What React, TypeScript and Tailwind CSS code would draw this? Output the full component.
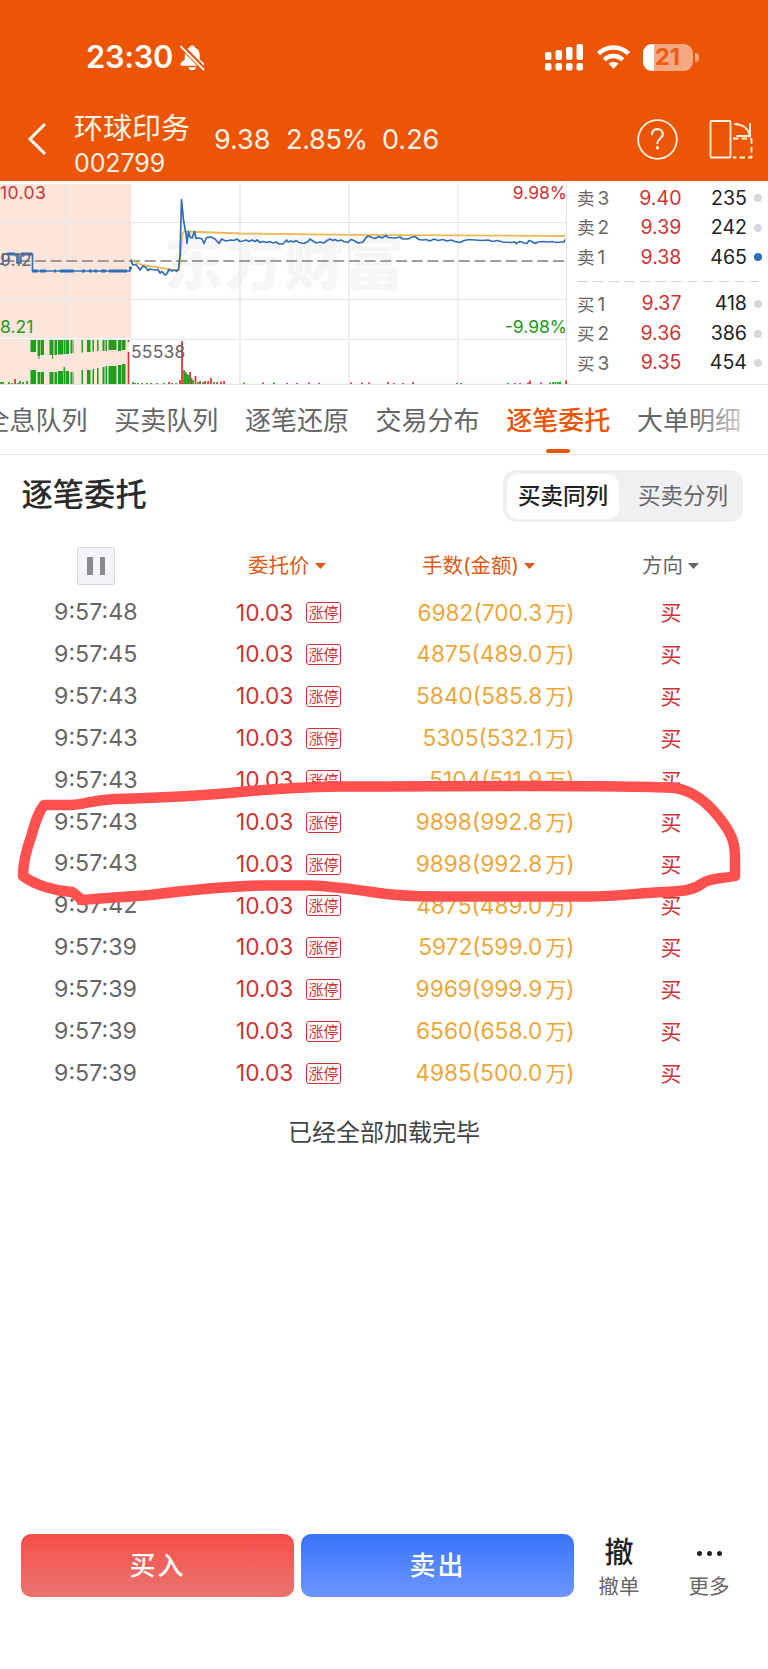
import clsx from 'clsx';

const ORDERS = [
  { time: '9:57:48', hands: '6982', amount: '700.3' },
  { time: '9:57:45', hands: '4875', amount: '489.0' },
  { time: '9:57:43', hands: '5840', amount: '585.8' },
  { time: '9:57:43', hands: '5305', amount: '532.1' },
  { time: '9:57:43', hands: '5104', amount: '511.9' },
  { time: '9:57:43', hands: '9898', amount: '992.8' },
  { time: '9:57:43', hands: '9898', amount: '992.8' },
  { time: '9:57:42', hands: '4875', amount: '489.0' },
  { time: '9:57:39', hands: '5972', amount: '599.0' },
  { time: '9:57:39', hands: '9969', amount: '999.9' },
  { time: '9:57:39', hands: '6560', amount: '658.0' },
  { time: '9:57:39', hands: '4985', amount: '500.0' },
];

const TABS = ['全息队列', '买卖队列', '逐笔还原', '交易分布', '逐笔委托', '大单明细'];

const ASKS = [
  { side: '卖', level: 3, price: '9.40', volume: 235 },
  { side: '卖', level: 2, price: '9.39', volume: 242 },
  { side: '卖', level: 1, price: '9.38', volume: 465, active: true },
];

const BIDS = [
  { side: '买', level: 1, price: '9.37', volume: 418 },
  { side: '买', level: 2, price: '9.36', volume: 386 },
  { side: '买', level: 3, price: '9.35', volume: 454 },
];

// [x, width, top bar height, bottom bar height]
const AUCTION_BARS = [
  [30.5, 5.5, 12, 14],
  [37.5, 2.5, 16, 12],
  [40.5, 3.5, 15, 12],
  [38.5, 1, 19, 12],
  [49.5, 4, 15, 12],
  [52, 1, 19, 12],
  [54.5, 2.5, 15, 12],
  [58, 5, 14.5, 13],
  [63.5, 1.5, 14, 17],
  [65.5, 3.5, 14, 13],
  [70.5, 1.5, 13.5, 12],
  [72.5, 1, 13, 12],
  [81.5, 1.5, 12.5, 14],
  [87, 3.5, 12, 14],
  [92.5, 1.5, 11.5, 15],
  [97, 1.5, 11, 16],
  [102.5, 2, 11, 17],
  [105.5, 1.5, 11, 18],
  [108.5, 8, 10, 18],
  [118, 3.5, 11, 19],
  [122, 3.5, 10, 20],
];

// [x, height, color]
const VOLUME_BARS: [number, number, string][] = [
  [1, 2, 'g'], [3, 2, 'g'], [9, 2, 'g'], [12, 1, 'g'], [15, 5, 'r'], [18, 1, 'g'], [20, 3, 'g'], [23, 2, 'g'], [27, 3, 'g'],
  [133, 2, 'g'], [135, 1, 'g'], [138, 1, 'g'], [142, 1, 'r'], [147, 1, 'g'], [151, 1, 'g'], [157, 1, 'g'], [164, 1, 'g'],
  [169, 2, 'r'], [172, 1, 'r'], [176, 1, 'g'], [180, 4, 'r'], [182, 43, 'r'], [184, 14, 'g'], [185.5, 12, 'g'], [187, 10, 'g'],
  [188.5, 9, 'g'], [190, 12, 'r'], [191.5, 6, 'g'], [193, 4, 'g'], [195.5, 8, 'r'], [198, 2, 'g'], [200, 3, 'r'], [203, 2, 'g'],
  [205, 3, 'r'], [208, 3, 'r'], [211, 6, 'r'], [214, 2, 'g'], [217, 2, 'r'], [221, 2.5, 'r'], [224, 3, 'r'], [244, 1.5, 'g'],
  [263, 1.5, 'r'], [274, 1.5, 'g'], [287, 1, 'r'], [297, 1, 'r'], [309, 1.5, 'r'], [319, 1, 'r'], [351, 1.5, 'r'],
  [362, 1.5, 'r'], [369, 1.5, 'r'], [388, 2, 'r'], [394, 1, 'r'], [403, 1, 'r'], [413, 2, 'r'], [457, 1, 'g'], [461, 1, 'g'],
  [508, 1, 'g'], [515, 1, 'r'], [520, 1, 'r'], [528, 1.5, 'r'], [530, 3.5, 'r'], [541, 1.5, 'r'], [550, 1.5, 'g'],
  [553, 2, 'g'], [555.5, 2, 'g'], [558, 2, 'g'], [560, 2.5, 'g'], [566, 3.5, 'r'],
];

const PRICE_LINE =
  '131,259.5 132,263 133,265 136,264.5 138,267 140,270 143,266 146,267.5 148,270.5 150,269 155,270 158,269.5 160,273 162,271.5 164,274 165.5,275 167,273.5 169,269.5 172,271 175,270 176.5,271.5 178.5,269 180,255 181.5,199.5 183.5,220 186,234 187,243.5 188.5,231.5 190,237 192,238 194.5,231.5 196,238.5 199,238 202,239 204,243.5 206.5,237.5 211,237 215,239 219,243.5 221.5,239 226,241 231,240 234,240.5 237,239 240,241.5 243,241 246,240 249,241.5 252,240 255,241.5 257,240 260,242.5 263,241.5 267,242.5 270,241.5 273,243 276,242 279,244 283,244 286.5,240 288,242 291,241 294,242 296,240.5 299,242.5 304,243.5 308,241.5 310,239 313,241 316,243 320,242 324,243 327,240.5 330,239 333,240.5 335,239.5 338,241 341,240 344,241.5 348,242.5 351,239.5 354,240.5 358,243 363,242 366,237.5 368,236 372,237.5 375,238.5 379,236.5 382,238 386,235.5 388,237.5 395,238 400,237 403,239 408,239 411,237.5 415,236.5 419,239.5 422,240 426,239.5 430,241 434,239 438,240.5 443,239.5 447,241 451,240 455,241.5 460,242.5 464,240.5 469,239.5 475,240 482,240.5 488,240 493,241.5 497,240.5 503,242 510,242.5 515,242 516,243.5 520,241.5 524,243 527,243.5 529,240.5 532,241.5 535,243.5 538,242 543,241.5 548,242 552,241.5 557,242.5 561,242 564,242 565,239.5';

const DIGITS = "font-['Inter','Noto_Sans_CJK_SC',sans-serif]";

function StatusBar() {
  return (
    <div className="flex h-[26px] items-center text-white">
      <span className="ml-[86px] w-[87px] whitespace-nowrap text-[30.8px] leading-none font-semibold tracking-[-0.3px]">23:30</span>
      <svg className="ml-[6px] size-[27px]" viewBox="0 0 27 27" fill="none">
        <path d="M13.2 1.5c-1.6 0-2.5 1-2.7 2-3 1.3-4.7 3.8-4.7 7.2v3.8c0 2-4.5 3.8-4.5 5.8 0 1 .7 1.5 1.8 1.5h20.2c1.1 0 1.8-.5 1.8-1.5 0-2-4.4-3.8-4.4-5.8v-3.8c0-3.4-1.8-5.9-4.8-7.2-.2-1-1.1-2-2.7-2z" fill="#fff" />
        <path d="M9.3 23.3h7.8c-.4 1.8-1.9 3-3.9 3s-3.500-1.200-3.900-3z" fill="#fff" />
        <path d="M1 .8l25 25.4" stroke="#eb5505" strokeWidth="5" />
        <path d="M1.500 2.200L25 26" stroke="#fff" strokeWidth="1.900" />
      </svg>
      <svg className="ml-[339px] h-[27px] w-[39px]" viewBox="0 0 39 27" fill="#fff">
        <rect x="0" y="8" width="6.500" height="8" rx="2" />
        <rect x="10.500" y="6" width="6.500" height="10" rx="2" />
        <rect x="21" y="3" width="6.500" height="13" rx="2" />
        <rect x="31.500" y="0" width="6.500" height="16" rx="2" />
        <rect x="0" y="19" width="6.500" height="7.500" rx="2.200" />
        <rect x="10.500" y="19" width="6.500" height="7.500" rx="2.200" />
        <rect x="21" y="19" width="6.500" height="7.500" rx="2.200" />
        <rect x="31.500" y="19" width="6.500" height="7.500" rx="2.200" />
      </svg>
      <svg className="ml-[12px] h-[26px] w-[35px]" viewBox="0 0 35 26" fill="none" stroke="#fff" strokeWidth="4.600">
        <path d="M2.500 9.700a21.200 21.200 0 0 1 30 0" />
        <path d="M8.300 15.800a13 13 0 0 1 18.400 0" />
        <path d="M17.500 24.800l-5-5a7.400 7.400 0 0 1 10 0z" fill="#fff" stroke="none" />
      </svg>
      <div className="ml-[12px] flex h-[27px] w-[50px] items-center overflow-hidden rounded-[9px] bg-[#f7a781]">
        <span className="h-full w-[11px] bg-white" />
        <span className="ml-[1px] text-[23.500px] leading-none font-bold text-[#eb5d12]">21</span>
      </div>
      <span className="ml-[1.500px] h-[9px] w-[4px] rounded-r-full bg-[#f7a781]" />
    </div>
  );
}

function StockHeader() {
  return (
    <div className="mt-[34px] flex h-[70px] items-center text-[#fff3e6]">
      <svg className="ml-[27px] h-[34px] w-[20px]" viewBox="0 0 20 34" fill="none" stroke="#fff" strokeWidth="3">
        <path d="M18 2L3 17l15 15" />
      </svg>
      <div className="ml-[27px] flex w-[140px] flex-col pt-[12px]">
        <span className="text-[29px] leading-[36px] whitespace-nowrap">环球印务</span>
        <span className="text-[25px] leading-[33px] tracking-[-0.1px]">002799</span>
      </div>
      <div className="flex gap-[15px] text-[27px] leading-none">
        <span className="w-[57px]">9.38</span>
        <span className="w-[81px] tracking-[-0.300px]">2.85%</span>
        <span className="w-[56px]">0.26</span>
      </div>
      <svg className="ml-auto size-[41px]" viewBox="0 0 41 41" fill="none" stroke="#fff3e6">
        <circle cx="20.500" cy="20.500" r="19.300" strokeWidth="1.800" />
        <path d="M15 15.200c.2-3.200 2.300-5 5.400-5s5.500 1.900 5.500 4.900c0 4.200-5.500 4.600-5.500 9" strokeWidth="2.200" strokeLinecap="round" />
        <circle cx="20.500" cy="28.800" r="1.700" fill="#fff3e6" stroke="none" />
      </svg>
      <svg className="mr-[15px] ml-[31px] h-[40px] w-[44px]" viewBox="0 0 44 40" fill="none" stroke="#fff3e6" strokeWidth="1.800">
        <rect x="1.500" y="2" width="20" height="36.500" rx="1" />
        <path d="M25.500 5c8 .3 13.800 4.300 15 11M41 4v13H27.500" />
        <path d="M24 19.500h18.500M42.500 19.500v19H24" strokeDasharray="5.500 3" />
      </svg>
    </div>
  );
}

function MinuteChart() {
  return (
    <div className="relative h-[204px] w-[567px] overflow-hidden">
      <svg className="block h-[204px] w-[567px]" viewBox="0 181 567 204" fill="none">
        <rect x="0" y="184" width="131" height="154" fill="#fce6dc" />
        <rect x="0" y="340" width="129" height="44" fill="#fce6dc" />
        <text
          x="164"
          y="285"
          fontSize="60"
          fontWeight="900"
          textLength="240"
          fill="#f6f6f8"
          className="font-['Noto_Sans_CJK_SC',sans-serif]"
        >
          东方财富
        </text>
        <g stroke="#e4e5ec" strokeWidth="1.200">
          <path d="M65.500 184V338M240 184V338M349 184V338M458 184V338M65.500 341V384M240 341V384M349 341V384M458 341V384" />
          <path d="M0 222.500H567M0 299.500H567M0 339.500H567M0 384.300H567M566.500 182V385" />
        </g>
        <path d="M3.500 261H567" stroke="#7d807d" strokeWidth="1.500" strokeDasharray="11 4.700" />
        <g fill="#1ea01a">
          {AUCTION_BARS.map(([x, w, top, bottom], i) => (
            <g key={i}>
              <rect x={x} y={340} width={w} height={top} />
              <rect x={x} y={384 - bottom} width={w} height={bottom} />
            </g>
          ))}
        </g>
        <path d="M128.500 340v2M128.500 352v32" stroke="#d8302f" strokeWidth="1.600" />
        {VOLUME_BARS.map(([x, h, c], i) => (
          <rect key={i} x={x - 0.8} y={384 - h} width="1.700" height={h} fill={c === 'g' ? '#1e9c1c' : '#d8302f'} />
        ))}
        <polyline
          points="131,260 137,263 143,265 155,267 165,268.500 174,270 179,270 181,250 182.500,233 185,231.500 200,232 240,233.500 350,234.800 565,236"
          stroke="#ecb755"
          strokeWidth="1.800"
        />
        <polyline points={PRICE_LINE} stroke="#2f6db5" strokeWidth="1.700" strokeLinejoin="round" />
        <path d="M0 264h3v-10h14v9h4v-9h11.500v17H130v-4" stroke="#2f6db5" strokeWidth="1.600" />
        <path
          d="M7 254h8M21 254h11M32 271h6M40 271h6M54 271h2M60 271h14M82 271h3M89 271h3M94 271h3M101 271h5M109 271h18"
          stroke="#2f6db5"
          strokeWidth="3.200"
        />
        <circle cx="130.500" cy="268" r="1.700" fill="#2f6db5" />
      </svg>
      <div className="absolute inset-0 text-[17.500px] leading-[20px] text-[#666]">
        <span className="absolute top-[2px] left-0 tracking-[0.400px] text-[#cf3232]">10.03</span>
        <span className="absolute top-[69px] left-0">9.12</span>
        <span className="absolute top-[136px] left-0 text-[#22981e]">8.21</span>
        <span className="absolute top-[161px] left-[131px] tracking-[0.200px]">55538</span>
        <span className="absolute top-[2px] right-0 text-[#cf3232]">9.98%</span>
        <span className="absolute top-[136px] right-0 text-[#22981e]">-9.98%</span>
      </div>
    </div>
  );
}

function BookRow({ side, level, price, volume, active }: { side: string; level: number; price: string; volume: number; active?: boolean }) {
  return (
    <div className="flex h-[29.600px] items-center text-[19.600px] leading-none">
      <span className="w-[42px] text-[17.500px] text-[#666]">
        {side}
        <span className="ml-[3px] text-[19px]">{level}</span>
      </span>
      <span className="w-[62.500px] text-right text-[#cf3232]">{price}</span>
      <span className="w-[65.500px] text-right text-[#222]">{volume}</span>
      <span className={clsx('ml-[7px] size-[8px] rounded-full', active ? 'bg-[#2f6fbd]' : 'bg-[#d6d7df]')} />
    </div>
  );
}

function OrderBook() {
  return (
    <div className="flex-1 overflow-hidden pt-[2.500px] pl-[10px]">
      {ASKS.map((row) => (
        <BookRow key={row.level} {...row} />
      ))}
      <svg className="mt-[8.500px] mb-[7px] block h-[1.500px] w-[182px]" viewBox="0 0 182 1.500">
        <path d="M0 .75H182" stroke="#d3d4da" strokeWidth="1.500" strokeDasharray="11 4.700" />
      </svg>
      {BIDS.map((row) => (
        <BookRow key={row.level} {...row} />
      ))}
    </div>
  );
}

function Tabs() {
  return (
    <div className="relative flex h-[70px] gap-[26.700px] overflow-hidden border-b border-[#e6e6e8] pl-0 text-[26px] leading-[71px] text-[#666]">
      {TABS.map((tab, i) => (
        <div
          key={tab}
          className={clsx(
            'relative w-[104px] shrink-0 whitespace-nowrap',
            i === 0 && '-ml-[16.500px]',
            tab === '逐笔委托' && 'font-medium text-[#eb5505]',
          )}
        >
          {tab}
          {tab === '逐笔委托' && <span className="absolute bottom-[1px] left-[40px] h-[4px] w-[24px] rounded-full bg-[#eb5505]" />}
        </div>
      ))}
      <div className="absolute inset-y-0 right-0 w-[80px] bg-linear-to-r from-transparent to-white" />
    </div>
  );
}

function Caret({ className }: { className?: string }) {
  return (
    <svg className={clsx('h-[6px] w-[11px]', className)} viewBox="0 0 11 6" fill="currentColor">
      <path d="M0 0h11L5.500 6z" />
    </svg>
  );
}

function OrderTable() {
  return (
    <div className="relative">
      <div className="flex h-[55px] items-center pt-[3px] text-[20.500px] leading-none text-[#dc5a14]">
        <div className="ml-[77px] flex size-[38px] items-center justify-center gap-[7px] rounded-[3px] border border-[#d5d6de] bg-[#f5f5f9]">
          <span className="h-[18px] w-[5.500px] bg-[#8b8b8e]" />
          <span className="h-[18px] w-[5.500px] bg-[#8b8b8e]" />
        </div>
        <div className="ml-[133px] flex w-[174px] items-center">
          委托价
          <Caret className="ml-[5px]" />
        </div>
        <div className="flex w-[220px] items-center whitespace-nowrap">
          手数(金额)
          <Caret className="ml-[5px]" />
        </div>
        <div className="flex items-center text-[#666]">
          方向
          <Caret className="ml-[5px]" />
        </div>
      </div>
      {ORDERS.map((order, i) => (
        <div key={i} className="flex h-[41.870px] items-center pl-[54px] text-[23.200px] leading-none">
          <span className="w-[182px] text-[#666]">{order.time}</span>
          <span className="w-[70px] text-[22.700px] text-[#cf3232]">10.03</span>
          <span className="flex h-[21px] w-[35px] items-center justify-center rounded-[3px] border border-[#cf3232] text-[15px] leading-none text-[#cf3232]">
            涨停
          </span>
          <span className="w-[233.500px] text-right text-[22.700px] text-[#eda63a]">
            {order.hands}({order.amount}
            <span className="ml-[3px] text-[21px]">万</span>)
          </span>
          <span className="ml-[86px] text-[21px] text-[#cf3232]">买</span>
        </div>
      ))}
      {/* hand-drawn marker round the two identical orders */}
      <svg className="pointer-events-none absolute top-[242px] left-0 h-[130px] w-[768px]" viewBox="0 780 768 130" fill="none">
        <path
          d="M44 806H70C85 806 90 801 115 800C150 799 200 797 240 793C280 789 310 788 340 787.500C430 787.500 540 786.500 620 787.500C650 788 665 788 675 789C695 792 712 808 724 825C733 838 735 845 735 860V877C722 880 712 878 703 884C694 891 685 892 665 893C640 894 615 897.500 590 897.500H440C410 897.500 390 896 372 893C345 889 330 887 310 886.500H260C225 887.500 190 891 150 896C125 898 105 899 82 901C78 898 76 895 72 893C55 892 35 886 23 877C23 865 26 852 31 838C35 825 37 815 44 806Z"
          stroke="#ff5050"
          strokeWidth="10.500"
          strokeLinejoin="round"
        />
      </svg>
    </div>
  );
}

function BottomBar() {
  return (
    <div className="flex h-[63px] pl-[21px] text-[26px] leading-[63px] font-medium tracking-[2px] text-white">
      <button className="h-[63px] w-[273px] rounded-[10px] bg-linear-to-b from-[#f54e4a] to-[#ea736e]">买入</button>
      <button className="ml-[7px] h-[63px] w-[273px] rounded-[10px] bg-linear-to-b from-[#3a73fa] to-[#6b97ff]">卖出</button>
      <div className="ml-[15px] flex w-[60px] flex-col items-center tracking-normal">
        <span className="shrink-0 text-[29px] leading-[38px] text-[#222]">撤</span>
        <span className="shrink-0 text-[20.500px] leading-[30px] font-normal text-[#666]">撤单</span>
      </div>
      <div className="ml-[30px] flex w-[60px] flex-col items-center tracking-normal">
        <span className="flex h-[38px] shrink-0 items-center gap-[5px]">
          <span className="size-[5px] rounded-full bg-[#222]" />
          <span className="size-[5px] rounded-full bg-[#222]" />
          <span className="size-[5px] rounded-full bg-[#222]" />
        </span>
        <span className="shrink-0 text-[20.500px] leading-[30px] font-normal text-[#666]">更多</span>
      </div>
    </div>
  );
}

export default function App() {
  return (
    <main className={clsx('flex h-[1669px] w-[768px] flex-col overflow-hidden bg-white', DIGITS)}>
      <header className="h-[181px] bg-[#eb5505] pt-[44px]">
        <StatusBar />
        <StockHeader />
      </header>
      <section className="flex h-[204px] border-b border-[#e4e5e9]">
        <MinuteChart />
        <OrderBook />
      </section>
      <Tabs />
      <div className="mt-[15px] flex h-[52px] items-center justify-between pr-[25px] pl-[21.500px]">
        <h1 className="text-[31.300px] leading-none font-medium text-[#2b2b2b]">逐笔委托</h1>
        <div className="flex h-[52px] w-[240px] items-center rounded-[13px] bg-[#f0f0f3] p-[4px] text-[22.500px] leading-none">
          <span className="flex h-[45px] w-[112px] items-center justify-center rounded-[11px] bg-white font-medium text-[#222]">买卖同列</span>
          <span className="flex flex-1 items-center justify-center pl-[8px] text-[#666]">买卖分列</span>
        </div>
      </div>
      <div className="mt-[15px]">
        <OrderTable />
      </div>
      <p className="mt-[25px] text-center text-[24px] leading-[28px] text-[#444]">已经全部加载完毕</p>
      <div className="mt-auto mb-[72px]">
        <BottomBar />
      </div>
    </main>
  );
}
